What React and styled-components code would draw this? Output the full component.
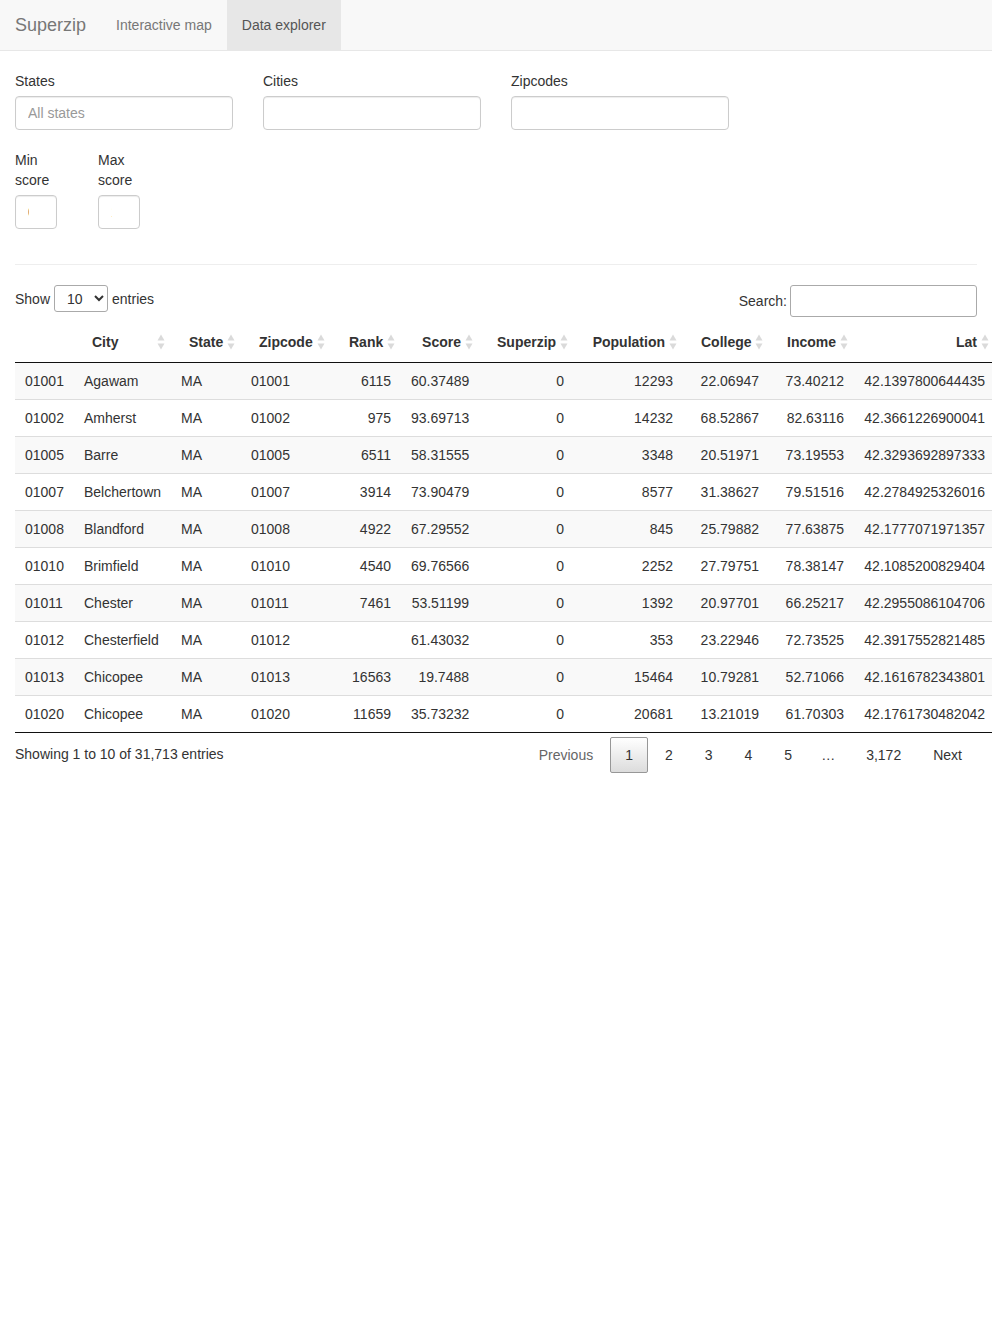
import React from "react";
import styled, { createGlobalStyle } from "styled-components";

const GlobalStyle = createGlobalStyle`
  html, body {
    overflow-x: hidden;
  }
  body {
    margin: 0;
    background: #fff;
    font-family: "Liberation Sans", Arial, Helvetica, sans-serif;
    font-size: 14px;
    line-height: 20px;
    color: #333;
  }
  * {
    box-sizing: border-box;
  }
`;

const columns = [
  { key: "id", label: "", width: 59, align: "left" },
  { key: "city", label: "City", width: 97, align: "left" },
  { key: "state", label: "State", width: 70, align: "left" },
  { key: "zip", label: "Zipcode", width: 90, align: "left" },
  { key: "rank", label: "Rank", width: 70, align: "right" },
  { key: "score", label: "Score", width: 78, align: "right" },
  { key: "superzip", label: "Superzip", width: 95, align: "right" },
  { key: "pop", label: "Population", width: 109, align: "right" },
  { key: "college", label: "College", width: 86, align: "right" },
  { key: "income", label: "Income", width: 85, align: "right" },
  { key: "lat", label: "Lat", width: 141, align: "right" },
];

const rows = [
  ["01001", "Agawam", "MA", "01001", "6115", "60.37489", "0", "12293", "22.06947", "73.40212", "42.1397800644435"],
  ["01002", "Amherst", "MA", "01002", "975", "93.69713", "0", "14232", "68.52867", "82.63116", "42.3661226900041"],
  ["01005", "Barre", "MA", "01005", "6511", "58.31555", "0", "3348", "20.51971", "73.19553", "42.3293692897333"],
  ["01007", "Belchertown", "MA", "01007", "3914", "73.90479", "0", "8577", "31.38627", "79.51516", "42.2784925326016"],
  ["01008", "Blandford", "MA", "01008", "4922", "67.29552", "0", "845", "25.79882", "77.63875", "42.1777071971357"],
  ["01010", "Brimfield", "MA", "01010", "4540", "69.76566", "0", "2252", "27.79751", "78.38147", "42.1085200829404"],
  ["01011", "Chester", "MA", "01011", "7461", "53.51199", "0", "1392", "20.97701", "66.25217", "42.2955086104706"],
  ["01012", "Chesterfield", "MA", "01012", "", "61.43032", "0", "353", "23.22946", "72.73525", "42.3917552821485"],
  ["01013", "Chicopee", "MA", "01013", "16563", "19.7488", "0", "15464", "10.79281", "52.71066", "42.1616782343801"],
  ["01020", "Chicopee", "MA", "01020", "11659", "35.73232", "0", "20681", "13.21019", "61.70303", "42.1761730482042"],
];

function SortIcon() {
  return (
    <SortMark width="8" height="18" viewBox="0 0 8 18">
      <path d="M4 1.5 L7.5 7.5 L0.5 7.5 Z" fill="#dadada" />
      <path d="M4 16.5 L7.5 10.5 L0.5 10.5 Z" fill="#dadada" />
    </SortMark>
  );
}

export default function App() {
  return (
    <>
      <GlobalStyle />
      <Navbar>
        <Brand>Superzip</Brand>
        <NavLink>Interactive map</NavLink>
        <NavLink $active>Data explorer</NavLink>
      </Navbar>

      <Page>
        <FilterRow>
          <Field>
            <Label>States</Label>
            <TextBox placeholder="All states" />
          </Field>
          <Field>
            <Label>Cities</Label>
            <TextBox />
          </Field>
          <Field>
            <Label>Zipcodes</Label>
            <TextBox />
          </Field>
        </FilterRow>

        <ScoreRow>
          <SmallField>
            <Label>Min score</Label>
            <NumBox type="number" defaultValue={0} />
          </SmallField>
          <SmallField>
            <Label>Max score</Label>
            <NumBox type="number" defaultValue={100} />
          </SmallField>
        </ScoreRow>

        <Divider />

        <Toolbar>
          <LengthLabel>
            Show
            <LengthSelect defaultValue="10">
              <option value="10">10</option>
              <option value="25">25</option>
              <option value="50">50</option>
              <option value="100">100</option>
            </LengthSelect>
            entries
          </LengthLabel>
          <SearchLabel>
            Search:
            <SearchInput type="search" />
          </SearchLabel>
        </Toolbar>

        <Table>
          <colgroup>
            {columns.map((c) => (
              <Col key={c.key} $w={c.width} />
            ))}
          </colgroup>
          <thead>
            <tr>
              {columns.map((c) => (
                <Th key={c.key} $align={c.align}>
                  {c.label}
                  {c.label && <SortIcon />}
                </Th>
              ))}
            </tr>
          </thead>
          <tbody>
            {rows.map((r) => (
              <Row key={r[0]}>
                {r.map((v, i) => (
                  <Td key={i} $align={columns[i].align}>
                    {v}
                  </Td>
                ))}
              </Row>
            ))}
          </tbody>
        </Table>

        <Footer>
          <Info>Showing 1 to 10 of 31,713 entries</Info>
          <Pager>
            <PageButton $disabled>Previous</PageButton>
            <PageButton $current>1</PageButton>
            <PageButton>2</PageButton>
            <PageButton>3</PageButton>
            <PageButton>4</PageButton>
            <PageButton>5</PageButton>
            <Ellipsis>…</Ellipsis>
            <PageButton>3,172</PageButton>
            <PageButton>Next</PageButton>
          </Pager>
        </Footer>
      </Page>
    </>
  );
}

const Navbar = styled.nav`
  display: flex;
  height: 51px;
  background: #f8f8f8;
  border-bottom: 1px solid #e7e7e7;
  margin-bottom: 20px;
`;

const Brand = styled.div`
  padding: 15px;
  font-size: 18px;
  line-height: 20px;
  color: #777;
`;

const NavLink = styled.div`
  padding: 15px;
  line-height: 20px;
  color: ${(p) => (p.$active ? "#555" : "#777")};
  background: ${(p) => (p.$active ? "#e7e7e7" : "transparent")};
`;

const Page = styled.div`
  padding: 0 15px;
`;

const FilterRow = styled.div`
  display: flex;
`;

const Field = styled.div`
  width: 248px;
  padding-right: 30px;
  margin-bottom: 15px;
`;

const ScoreRow = styled.div`
  display: flex;
  margin-top: 5px;
`;

const SmallField = styled.div`
  width: 83px;
  padding-right: 30px;
  margin-bottom: 15px;
`;

const Label = styled.label`
  display: block;
  margin-bottom: 5px;
  font-weight: normal;
  color: #333;
`;

const TextBox = styled.input`
  display: block;
  width: 218px;
  height: 34px;
  padding: 6px 12px;
  border: 1px solid #ccc;
  border-radius: 4px;
  font-family: inherit;
  font-size: 14px;
  color: #333;
  box-shadow: inset 0 1px 1px rgba(0, 0, 0, 0.075);
  &::placeholder {
    color: #999;
  }
`;

const NumBox = styled.input`
  display: block;
  width: 42px;
  height: 34px;
  padding: 6px 12px;
  border: 1px solid #ccc;
  border-radius: 4px;
  font-family: inherit;
  font-size: 14px;
  color: #555;
  box-shadow: inset 0 1px 1px rgba(0, 0, 0, 0.075);
`;

const Divider = styled.hr`
  margin: 20px 0;
  border: 0;
  border-top: 1px solid #eee;
`;

const Toolbar = styled.div`
  display: flex;
  justify-content: space-between;
  align-items: flex-start;
  height: 32px;
  margin-bottom: 5px;
`;

const LengthLabel = styled.label`
  display: flex;
  align-items: center;
  gap: 4px;
  height: 27px;
  color: #333;
`;

const LengthSelect = styled.select`
  width: 54px;
  height: 27px;
  padding: 0 4px 0 8px;
  border: 1px solid #aaa;
  border-radius: 3px;
  background: #fff;
  font-family: inherit;
  font-size: 14px;
  color: #333;
`;

const SearchLabel = styled.label`
  display: flex;
  align-items: center;
  gap: 3px;
  height: 32px;
  color: #333;
`;

const SearchInput = styled.input`
  width: 187px;
  height: 32px;
  padding: 5px;
  border: 1px solid #aaa;
  border-radius: 3px;
  background: #fff;
  font-family: inherit;
  font-size: 14px;
`;

const Table = styled.table`
  table-layout: fixed;
  width: 980px;
  border-collapse: separate;
  border-spacing: 0;
  border-bottom: 1px solid #111;
`;

const Col = styled.col`
  width: ${(p) => p.$w}px;
`;

const Th = styled.th`
  position: relative;
  padding: 10px 18px;
  text-align: ${(p) => p.$align};
  font-weight: bold;
  white-space: nowrap;
  border-bottom: 1px solid #111;
`;

const SortMark = styled.svg`
  position: absolute;
  right: 6px;
  top: 50%;
  margin-top: -9px;
`;

const Row = styled.tr`
  background: #fff;
  &:nth-child(odd) {
    background: #f9f9f9;
  }
  & + & > td {
    border-top: 1px solid #ddd;
  }
`;

const Td = styled.td`
  padding: 8px 10px;
  text-align: ${(p) => p.$align};
  white-space: nowrap;
  color: #333;
`;

const Footer = styled.div`
  display: flex;
  justify-content: space-between;
  align-items: flex-start;
`;

const Info = styled.div`
  padding-top: 11px;
  color: #333;
`;

const Pager = styled.div`
  display: flex;
  align-items: center;
  padding-top: 4px;
`;

const PageButton = styled.span`
  padding: 7px 14px;
  margin-left: 2px;
  border: 1px solid ${(p) => (p.$current ? "#979797" : "transparent")};
  border-radius: 2px;
  line-height: 20px;
  color: ${(p) => (p.$disabled ? "#666" : "#333")};
  background: ${(p) =>
    p.$current ? "linear-gradient(to bottom, #fff 0%, #dcdcdc 100%)" : "transparent"};
`;

const Ellipsis = styled.span`
  padding: 0 14px;
  color: #333;
`;
